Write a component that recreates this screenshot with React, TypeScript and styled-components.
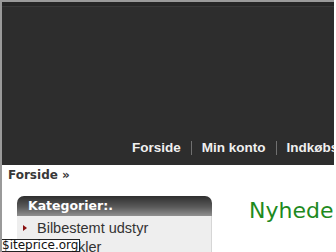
import React from "react";
import styled, { createGlobalStyle } from "styled-components";

const Global = createGlobalStyle`
  html, body { margin: 0; padding: 0; background: #fff; }
  body { width: 336px; height: 252px; overflow: hidden; font-family: "DejaVu Sans", Verdana, sans-serif; }
`;

const Page = styled.div`
  position: relative;
  width: 334px;
  height: 252px;
  border-left: 2px solid #9a9a9a;
  border-top: 2px solid #9a9a9a;
  box-sizing: border-box;
  overflow: hidden;
  display: flex;
  flex-direction: column;
`;

const Header = styled.header`
  height: 163px;
  flex: none;
  background: #2d2d2d;
  border-top: 4px solid #262626;
  box-shadow: inset 0 1px 0 #383838;
  box-sizing: border-box;
  display: flex;
  align-items: flex-end;
  padding: 0 0 10px 128px;
`;

const Nav = styled.nav`
  display: flex;
  align-items: center;
  white-space: nowrap;
`;

const NavLink = styled.span`
  color: #f0f0f0;
  font-family: "Liberation Sans", Arial, sans-serif;
  font-weight: bold;
  font-size: 13.5px;
  padding: 0 10px 0 2px;
`;

const Sep = styled.span`
  width: 1px;
  height: 14px;
  background: #707070;
  margin-right: 8px;
`;

const Crumb = styled.div`
  font-size: 12px;
  font-weight: bold;
  color: #383838;
  padding: 3px 0 0 6px;
  height: 15px;
`;

const Main = styled.div`
  display: flex;
  padding: 14px 0 0 15px;
  gap: 37px;
`;

const Side = styled.aside`
  width: 195px;
  flex: none;
`;

const BoxHead = styled.div`
  height: 20px;
  border-radius: 7px 7px 0 0;
  background: linear-gradient(#2e2e2e, #5a5a5a 55%, #909090);
  color: #fff;
  font-weight: bold;
  font-size: 12.5px;
  line-height: 20px;
  padding-left: 11px;
`;

const BoxBody = styled.ul`
  margin: 0;
  padding: 2px 0 0 4px;
  list-style: none;
  background: #eeeeee;
  border-right: 1px solid #d6d6d6;
  height: 60px;
`;

const Item = styled.li`
  display: flex;
  align-items: center;
  font-family: "Liberation Sans", Arial, sans-serif;
  font-size: 14.5px;
  color: #333;
  height: 19px;
`;

const Arrow = styled.span`
  width: 0;
  height: 0;
  border-left: 4px solid #8a1010;
  border-top: 3.5px solid transparent;
  border-bottom: 3.5px solid transparent;
  margin: 0 10px 0 2px;
`;

const Title = styled.h1`
  margin: 2px 0 0 0;
  font-size: 22px;
  font-weight: normal;
  color: #1e8a1e;
  white-space: nowrap;
`;

const Watermark = styled.div`
  position: absolute;
  left: -2px;
  bottom: 0;
  background: #fff;
  border: 1px solid #222;
  font-size: 12px;
  line-height: 11px;
  padding: 0 1px;
  color: #111;
`;

export default function App() {
  return (
    <>
      <Global />
      <Page>
        <Header>
          <Nav>
            <NavLink>Forside</NavLink>
            <Sep />
            <NavLink>Min konto</NavLink>
            <Sep />
            <NavLink>Indkøbskurv</NavLink>
          </Nav>
        </Header>
        <Crumb>Forside »</Crumb>
        <Main>
          <Side>
            <BoxHead>Kategorier:.</BoxHead>
            <BoxBody>
              <Item><Arrow />Bilbestemt udstyr</Item>
              <Item><Arrow />Bil-artikler</Item>
            </BoxBody>
          </Side>
          <Title>Nyheder</Title>
        </Main>
        <Watermark>$iteprice.org</Watermark>
      </Page>
    </>
  );
}
